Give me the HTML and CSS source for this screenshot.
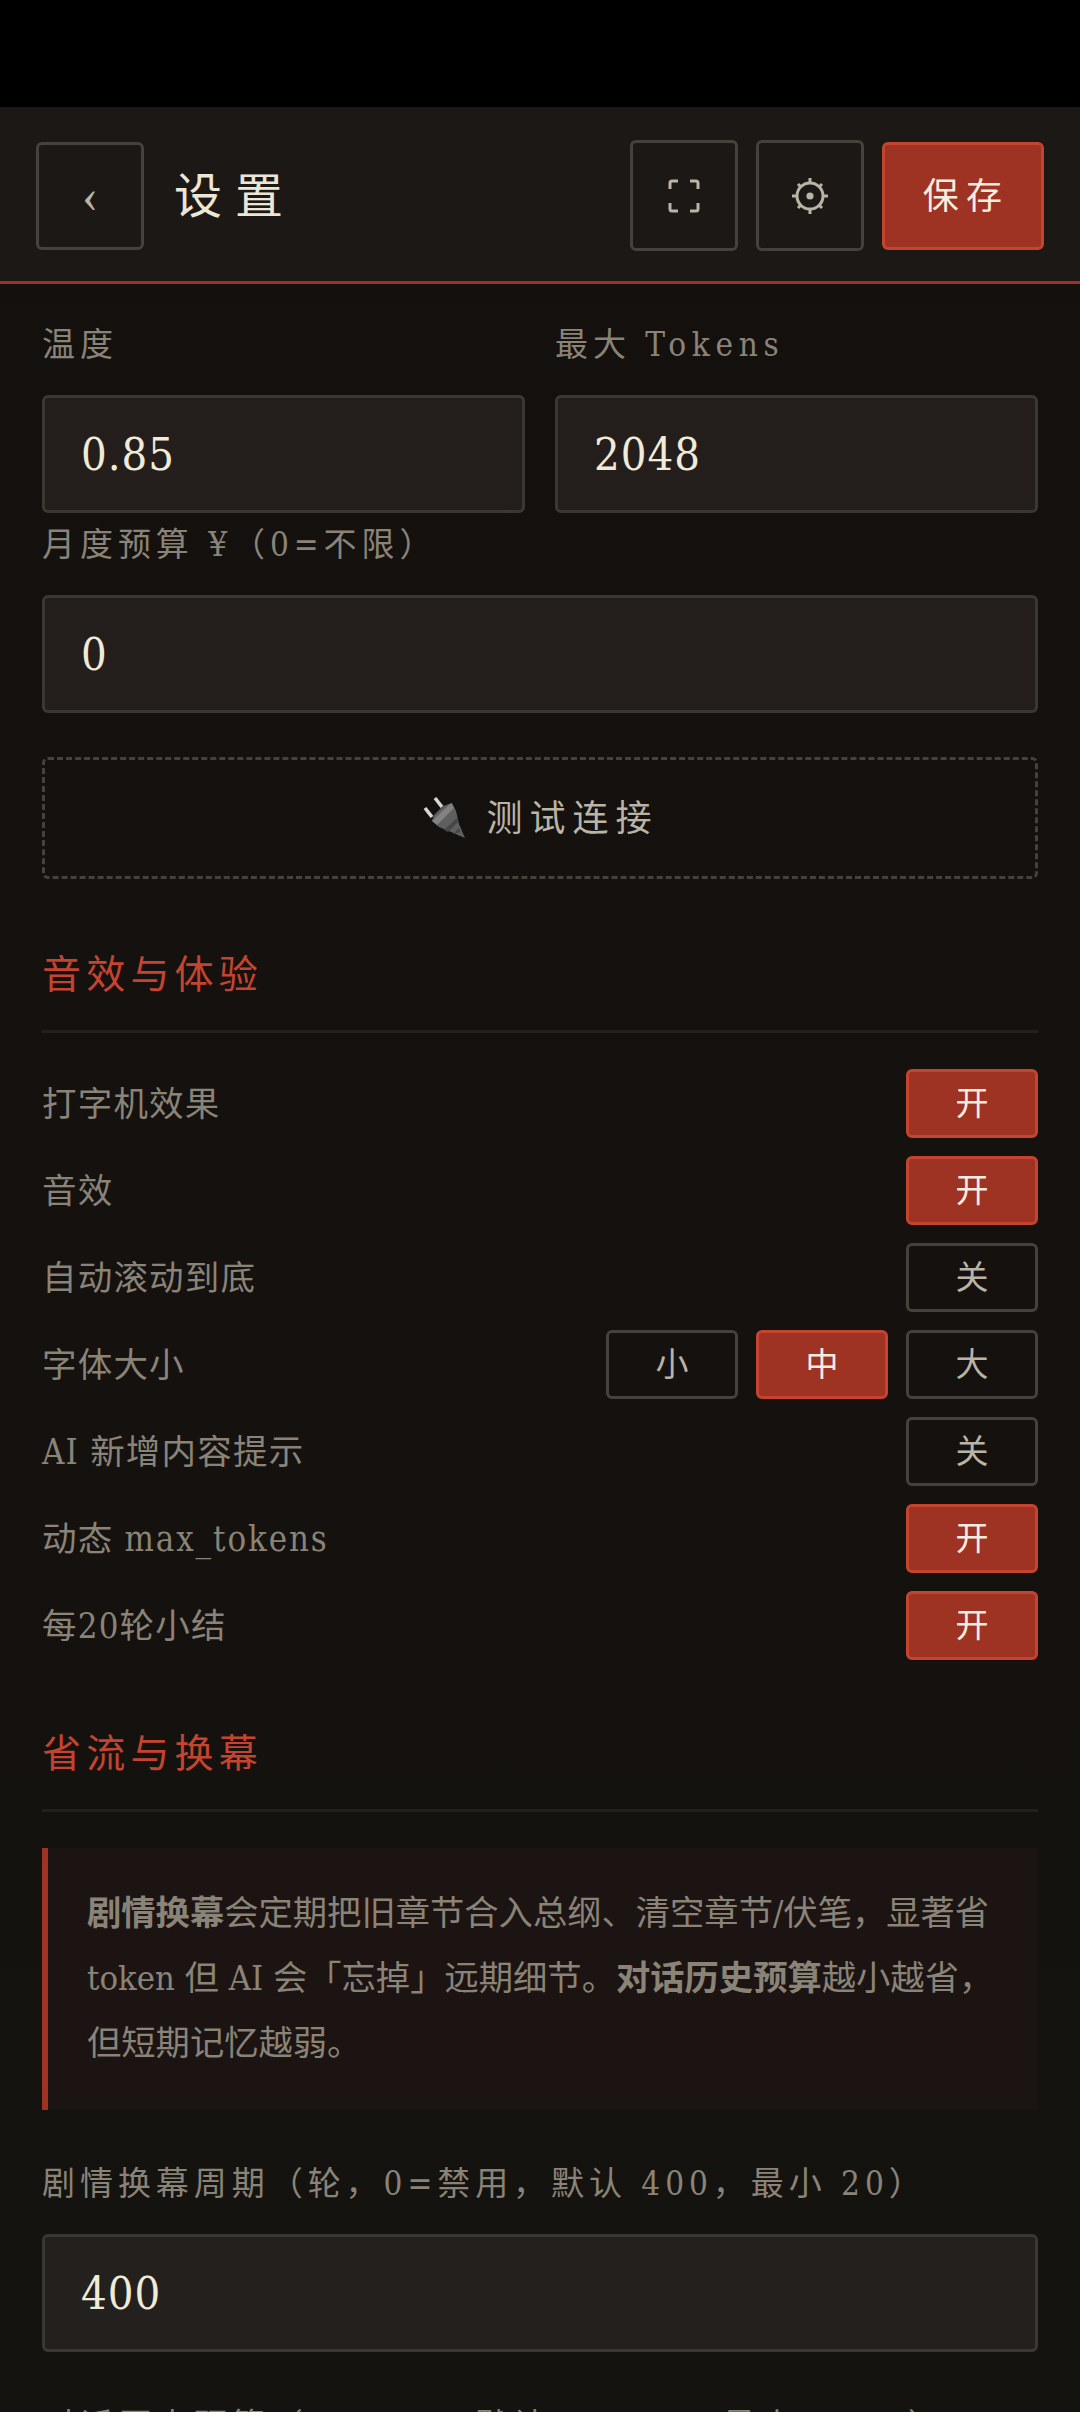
FILE: index.html
```html
<!DOCTYPE html>
<html lang="zh">
<head>
<meta charset="utf-8">
<title>设置</title>
<link rel="stylesheet" href="styles.css">
</head>
<body>
<div class="status"></div>
<header class="top">
  <button class="btn back">‹</button>
  <h1 class="title">设置</h1>
  <div class="top-actions">
    <button class="btn icon">
      <svg width="36" height="36" viewBox="0 0 36 36" fill="none" stroke="currentColor" stroke-width="3"><path d="M12 3H6a2 2 0 0 0-2 2v6M24 3h6a2 2 0 0 1 2 2v6M12 33H6a2 2 0 0 1-2-2v-6M24 33h6a2 2 0 0 0 2-2v-6"/></svg>
    </button>
    <button class="btn icon">
      <svg width="40" height="40" viewBox="0 0 40 40" fill="none" stroke="currentColor"><circle cx="20" cy="20" r="13" stroke-width="3"/><circle cx="20" cy="20" r="3.6" fill="currentColor" stroke="none"/><path stroke-width="3" d="M20 2v6M20 32v6M2 20h6M32 20h6M8 8l3.500 3.500M32 8l-3.500 3.500M8 32l3.500-3.500M32 32l-3.500-3.500"/></svg>
    </button>
    <button class="btn save">保存</button>
  </div>
</header>
<main class="content">
  <div class="pair">
    <div>
      <div class="label">温度</div>
      <div class="field">0.85</div>
    </div>
    <div>
      <div class="label">最大 <span class="latin">Tokens</span></div>
      <div class="field">2048</div>
    </div>
  </div>
  <div class="label">月度预算 ¥（0=不限）</div>
  <div class="field">0</div>
  <button class="test">
    <svg class="plug" width="48" height="48" viewBox="0 0 48 48"><path d="M14 4l7 9M4 14l7 9" stroke="#d8d6d0" stroke-width="3.600" fill="none"/><path d="M22 12l9-3 4 8 3 13 6 14-14-6-12-5-7-6 2-6z" fill="#5f5f5f"/><path d="M11 27L30 9l3 5-17 17z" fill="#828282"/><path d="M23 36l13-12 1 4-10 10zM32 40l6-6 1.500 4z" fill="#474747"/></svg>
    <span>测试连接</span>
  </button>
  <h2 class="section">音效与体验</h2>
  <div class="rows">
    <div class="row"><span class="row-name">打字机效果</span><div class="opts"><button class="opt on">开</button></div></div>
    <div class="row"><span class="row-name">音效</span><div class="opts"><button class="opt on">开</button></div></div>
    <div class="row"><span class="row-name">自动滚动到底</span><div class="opts"><button class="opt">关</button></div></div>
    <div class="row"><span class="row-name">字体大小</span><div class="opts"><button class="opt">小</button><button class="opt on">中</button><button class="opt">大</button></div></div>
    <div class="row"><span class="row-name">AI 新增内容提示</span><div class="opts"><button class="opt">关</button></div></div>
    <div class="row"><span class="row-name">动态 <span class="code">max_tokens</span></span><div class="opts"><button class="opt on">开</button></div></div>
    <div class="row"><span class="row-name">每20轮小结</span><div class="opts"><button class="opt on">开</button></div></div>
  </div>
  <h2 class="section section-tight">省流与换幕</h2>
  <div class="note"><strong>剧情换幕</strong>会定期把旧章节合入总纲、清空章节/伏笔，显著省 token 但 AI 会「忘掉」远期细节。<strong>对话历史预算</strong>越小越省，但短期记忆越弱。</div>
  <div class="group">
    <div class="label">剧情换幕周期（轮，0=禁用，默认 400，最小 20）</div>
    <div class="field">400</div>
  </div>
  <div class="group">
    <div class="label">对话历史预算（tokens，默认 16000，最小 2000）</div>
    <div class="field">16000</div>
  </div>
</main>
</body>
</html>
```
FILE: styles.css
```css
* { box-sizing: border-box; }
html, body {
  margin: 0;
  height: 2412px;
  overflow: hidden;
}
body {
  background: linear-gradient(180deg, #14100e 0%, #14110e 50%, #141310 100%);
  font-family: "DejaVu Serif Condensed", "DejaVu Serif", "Noto Sans CJK SC", serif;
  font-stretch: condensed;
  color: #8a8378;
}
button { font: inherit; cursor: pointer; padding: 0; }
.status { height: 107px; background: #000; }
.top {
  display: flex;
  align-items: center;
  height: 177px;
  padding: 33px 36px 30px;
  background: #1b1815;
  border-bottom: 3px solid #9e3324;
}
.btn {
  height: 108px;
  background: transparent;
  border: 3px solid #45423d;
  border-radius: 6px;
  color: #bab4a6;
  display: flex;
  align-items: center;
  justify-content: center;
}
.back {
  width: 108px;
  font-family: "Liberation Serif", serif;
  font-size: 48px;
}
.title {
  margin: 0 0 0 30px;
  padding-bottom: 8px;
  font-family: "Noto Sans CJK SC", sans-serif;
  font-size: 48px;
  font-weight: 400;
  letter-spacing: 13px;
  color: #ece6d6;
}
.top-actions { margin-left: auto; display: flex; align-items: center; gap: 18px; }
.icon { width: 108px; height: 111px; }
.save {
  width: 162px;
  padding: 0 0 6px 6px;
  background: #9e3324;
  border-color: #c44430;
  color: #f7ecdf;
  font-family: "Noto Sans CJK SC", sans-serif;
  font-size: 36px;
  letter-spacing: 7.2px;
}
.content { padding: 29px 42px 0; }
.pair { display: grid; grid-template-columns: 1fr 1fr; gap: 30px; }
.label {
  height: 62px;
  margin-bottom: 20px;
  line-height: 64px;
  font-size: 33px;
  letter-spacing: 4.95px;
  white-space: nowrap;
  color: #8a8378;
}
.latin { letter-spacing: 5.700px; }
.field {
  height: 118px;
  padding: 0 36px;
  display: flex;
  align-items: center;
  background: rgba(255, 245, 225, 0.065);
  border: 3px solid #3b3732;
  border-radius: 6px;
  font-size: 45px;
  letter-spacing: 1px;
  color: #f0ead8;
}
.test {
  width: 100%;
  height: 122px;
  margin-top: 44px;
  padding-bottom: 6px;
  display: flex;
  align-items: center;
  justify-content: center;
  gap: 17px;
  background: transparent;
  border: 3px dashed #45423d;
  border-radius: 6px;
  color: #bab4a6;
  font-family: "Noto Sans CJK SC", sans-serif;
  font-size: 36px;
  letter-spacing: 7px;
}
.plug { display: block; margin-top: 6px; }
.section {
  height: 91px;
  margin: 63px 0 36px;
  line-height: 58px;
  border-bottom: 3px solid #221f1c;
  font-family: "Noto Sans CJK SC", sans-serif;
  font-size: 39px;
  font-weight: 400;
  letter-spacing: 5.200px;
  color: #c44430;
}
.section-tight { margin-top: 61px; }
.rows { display: flex; flex-direction: column; gap: 18px; }
.row { display: flex; align-items: center; justify-content: space-between; height: 69px; }
.row-name { padding-bottom: 6px; font-size: 34.500px; color: #8a8378; letter-spacing: 1.2px; }
.code { letter-spacing: 1.900px; }
.opts { display: flex; gap: 18px; }
.opt {
  width: 132px;
  height: 69px;
  padding-bottom: 6px;
  background: transparent;
  border: 3px solid #45423d;
  border-radius: 6px;
  color: #bab4a6;
  font-family: "Noto Sans CJK SC", sans-serif;
  font-size: 33px;
}
.on { background: #9e3324; border-color: #c44430; color: #f7ecdf; }
.note {
  padding: 33px 36px 34px 39px;
  background: #1c1412;
  border-left: 6px solid #9e3324;
  font-size: 34.300px;
  line-height: 65px;
  color: #8a8378;
}
.note strong { font-weight: 700; }
.group { margin-top: 42px; }
```
